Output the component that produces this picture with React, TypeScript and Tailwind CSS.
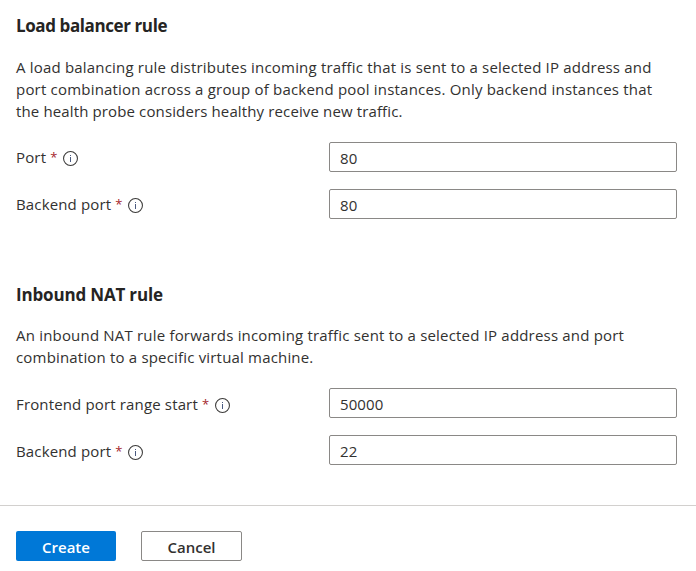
import React from "react";

function Info() {
  return (
    <svg className="mt-[3px] ml-[7px] h-[15px] w-[15px] shrink-0" viewBox="0 0 15 15" fill="none">
      <circle cx="7.5" cy="7.5" r="6.95" stroke="#3b3a39" strokeWidth="1.05" />
      <rect x="7" y="6" width="1" height="5" fill="#4a5a80" />
      <rect x="7" y="4" width="1" height="1" fill="#4a5a80" />
    </svg>
  );
}

function Field({ label, value, labelClass = "" }: { label: string; value: string; labelClass?: string }) {
  return (
    <div className="flex h-[30px] items-center">
      <label className={`flex w-[313px] items-center whitespace-nowrap ${labelClass}`}>
        <span className="tracking-[0.15px]">{label}</span>
        <span className="ml-[4px] w-[6px] text-[13px] text-[#a4262c]">*</span>
        <Info />
      </label>
      <input
        className="h-[30px] w-[348px] rounded-[2px] border border-[#8a8886] bg-white pt-px pl-[10px] tracking-[0.1px] outline-none"
        defaultValue={value}
      />
    </div>
  );
}

export default function App() {
  return (
    <div className="flex h-[571px] w-[696px] flex-col overflow-hidden bg-white font-['Open_Sans','Noto_Sans',sans-serif] text-[15px] leading-[22px] text-[#323130]">
      <section className="h-[269px] pl-4 pt-[14px]">
        <h2 className="h-6 text-[17px] leading-6 font-bold tracking-[-0.4px] text-[#252423]">Load balancer rule</h2>
        <p className="mt-[18px] whitespace-nowrap">
          <span className="block tracking-[0.19px]">A load balancing rule distributes incoming traffic that is sent to a selected IP address and</span>
          <span className="block tracking-[0.2px]">port combination across a group of backend pool instances. Only backend instances that</span>
          <span className="block tracking-[0.13px]">the health probe considers healthy receive new traffic.</span>
        </p>
        <div className="mt-[20px] flex flex-col gap-[17px]">
          <Field label="Port" value="80" />
          <Field label="Backend port" value="80" />
        </div>
      </section>
      <section className="h-[236px] pl-4 pt-[14px]">
        <h2 className="h-6 text-[17px] leading-6 font-bold tracking-[-0.17px] text-[#252423]">Inbound NAT rule</h2>
        <p className="mt-[17px] whitespace-nowrap">
          <span className="block tracking-[0.19px]">An inbound NAT rule forwards incoming traffic sent to a selected IP address and port</span>
          <span className="block tracking-[0.18px]">combination to a specific virtual machine.</span>
        </p>
        <div className="mt-[20px] flex flex-col gap-[17px]">
          <Field label="Frontend port range start" value="50000" labelClass="pt-[2px]" />
          <Field label="Backend port" value="22" labelClass="pt-[2px]" />
        </div>
      </section>
      <footer className="flex gap-[25px] border-t border-[#d2d0ce] pt-[25px] pl-4 font-semibold">
        <button className="h-[30px] w-[100px] rounded-[2px] bg-[#0078d7] pt-px text-white">Create</button>
        <button className="h-[30px] w-[101px] rounded-[2px] border border-[#8a8886] bg-white pt-px">Cancel</button>
      </footer>
    </div>
  );
}
